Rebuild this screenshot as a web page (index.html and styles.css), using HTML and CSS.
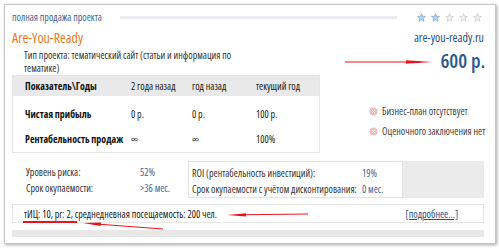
FILE: index.html
```html
<!DOCTYPE html>
<html lang="ru">
<head>
    <meta charset="UTF-8">
    <title>Are-You-Ready</title>
    <link rel="stylesheet" href="styles.css">
</head>
<body>
    <div class="card">
        <div class="topRow">
            <a class="saleType">полная продажа проекта</a>
            <div class="topLine"></div>
            <div class="stars">
                <svg class="star on" viewBox="0 0 10 10"><polygon points="5,0.6 6.2,3.7 9.5,3.8 6.9,5.9 7.8,9.3 5,7.4 2.2,9.3 3.1,5.9 0.5,3.8 3.8,3.7"/></svg>
                <svg class="star on" viewBox="0 0 10 10"><polygon points="5,0.6 6.2,3.7 9.5,3.8 6.9,5.9 7.8,9.3 5,7.4 2.2,9.3 3.1,5.9 0.5,3.8 3.8,3.7"/></svg>
                <svg class="star" viewBox="0 0 10 10"><polygon points="5,0.6 6.2,3.7 9.5,3.8 6.9,5.9 7.8,9.3 5,7.4 2.2,9.3 3.1,5.9 0.5,3.8 3.8,3.7"/></svg>
                <svg class="star" viewBox="0 0 10 10"><polygon points="5,0.6 6.2,3.7 9.5,3.8 6.9,5.9 7.8,9.3 5,7.4 2.2,9.3 3.1,5.9 0.5,3.8 3.8,3.7"/></svg>
                <svg class="star" viewBox="0 0 10 10"><polygon points="5,0.6 6.2,3.7 9.5,3.8 6.9,5.9 7.8,9.3 5,7.4 2.2,9.3 3.1,5.9 0.5,3.8 3.8,3.7"/></svg>
            </div>
        </div>

        <div class="titleRow">
            <div class="projectName">Are-You-Ready</div>
            <a class="domain">are-you-ready.ru</a>
        </div>

        <div class="mainRow">
            <div class="leftCol">
                <p class="projectType">Тип проекта: тематический сайт (статьи и информация по тематике)</p>
                <table class="finance">
                    <tr class="head">
                        <th>Показатель\Годы</th>
                        <td>2 года назад</td>
                        <td>год назад</td>
                        <td>текущий год</td>
                    </tr>
                    <tr class="first">
                        <th>Чистая прибыль</th>
                        <td>0 р.</td>
                        <td>0 р.</td>
                        <td>100 р.</td>
                    </tr>
                    <tr class="last">
                        <th>Рентабельность продаж</th>
                        <td>∞</td>
                        <td>∞</td>
                        <td>100%</td>
                    </tr>
                </table>
            </div>
            <div class="rightCol">
                <div class="price">600 р.</div>
                <ul class="docs">
                    <li><svg class="noIcon" viewBox="0 0 10 10"><circle cx="5" cy="5" r="4.5"/><path d="M3.3 3.3 L6.7 6.7 M6.7 3.3 L3.3 6.7"/></svg>Бизнес-план отсутствует</li>
                    <li><svg class="noIcon" viewBox="0 0 10 10"><circle cx="5" cy="5" r="4.5"/><path d="M3.3 3.3 L6.7 6.7 M6.7 3.3 L3.3 6.7"/></svg>Оценочного заключения нет</li>
                </ul>
            </div>
        </div>

        <div class="stats">
            <div class="statCell riskCell">
                <span>Уровень риска:</span><span class="val">52%</span>
                <span>Срок окупаемости:</span><span class="val">&gt;36 мес.</span>
            </div>
            <div class="statCell roiCell">
                <span>ROI (рентабельность инвестиций):</span><span class="val">19%</span>
                <span>Срок окупаемости с учётом дисконтирования:</span><span class="val">0 мес.</span>
            </div>
            <div class="statFill"></div>
        </div>

        <div class="seoRow">
            <span>тИЦ: 10, pr: 2, среднедневная посещаемость: 200 чел.</span>
            <a class="more" href="#">[подробнее...]</a>
        </div>
        <div class="bottomBar"></div>
    </div>

    <svg class="marks" width="499" height="249" viewBox="0 0 499 249">
        <line x1="345" y1="62" x2="420" y2="62"/>
        <polygon points="406,60.3 432,62 406,63.7"/>
        <rect x="23" y="221" width="54" height="2"/>
        <line x1="163" y1="229" x2="92" y2="223.7"/>
        <polygon points="83,223 101,222.6 100.6,226"/>
        <line x1="308" y1="214" x2="238" y2="214.8"/>
        <polygon points="227,215 246,213.3 246,216.5"/>
    </svg>
</body>
</html>
```
FILE: styles.css
```css
body {
    margin: 0;
    padding: 4px;
    font-family: "Open Sans", sans-serif;
    font-stretch: condensed;
    font-size: 10px;
    color: #333;
    background: #fff;
}

a {
    text-decoration: none;
}

.card {
    box-sizing: border-box;
    width: 492px;
    height: 240px;
    border: 1px solid #c9c9c9;
    box-shadow: 1px 1px 3px rgba(0, 0, 0, 0.35);
    padding: 5px 11px 0 7px;
    background: #fff;
}

.topRow {
    display: flex;
    align-items: center;
    height: 14px;
}

.saleType {
    width: 108px;
    color: #3b679a;
    font-size: 10px;
}

.topLine {
    flex: 1;
    height: 3px;
    background: #eeebf1;
    margin-right: 20px;
}

.stars {
    display: flex;
    gap: 5px;
    margin-right: 2px;
}

.star {
    width: 9px;
    height: 9px;
}

.star polygon {
    fill: #f3f3f3;
    stroke: #c9c9c9;
    stroke-width: 0.8;
}

.star.on polygon {
    fill: #b5d5ee;
    stroke: #7eaad4;
}

.titleRow {
    display: flex;
    justify-content: space-between;
    align-items: center;
    height: 18px;
    margin-top: 4px;
}

.projectName {
    color: #f07a1c;
    font-size: 14px;
}

.domain {
    color: #27508a;
    font-size: 12px;
}

.mainRow {
    display: flex;
}

.leftCol {
    width: 308px;
}

.projectType {
    width: 212px;
    margin: 3px 0 1px;
    padding-left: 12px;
    line-height: 12.5px;
    color: #333;
}

.finance {
    width: 308px;
    border-collapse: collapse;
    border: 1px solid #e6e6e6;
    table-layout: fixed;
}

.finance th,
.finance td {
    padding: 0;
    text-align: left;
    white-space: nowrap;
    overflow: hidden;
    color: #222;
}

.finance th {
    width: 106px;
    padding-left: 12px;
    font-weight: 700;
    color: #111;
}

.finance td:nth-child(2) {
    width: 61px;
}

.finance td:nth-child(3) {
    width: 64px;
}

.finance .head {
    height: 20px;
    background: #e9e9e9;
}

.finance .first {
    height: 31px;
    vertical-align: bottom;
}

.finance .first th,
.finance .first td {
    padding-bottom: 6px;
}

.finance .last {
    height: 26px;
    vertical-align: top;
}

.finance .last th,
.finance .last td {
    padding-top: 5px;
}

.rightCol {
    flex: 1;
    display: flex;
    flex-direction: column;
}

.price {
    margin-top: 4px;
    text-align: right;
    font-size: 20px;
    line-height: 22px;
    font-weight: 600;
    color: #2a5a8d;
}

.docs {
    list-style: none;
    margin: 32px 0 0;
    padding: 0 0 0 49px;
    display: flex;
    flex-direction: column;
    gap: 6px;
}

.docs li {
    display: flex;
    align-items: center;
    line-height: 14px;
    white-space: nowrap;
    color: #444;
}

.noIcon {
    width: 9px;
    height: 9px;
    margin-right: 4px;
}

.noIcon circle {
    fill: #f5b9c2;
}

.noIcon path {
    stroke: #fff;
    stroke-width: 1.1;
}

.stats {
    display: flex;
    height: 37px;
    margin-top: 8px;
}

.statCell {
    display: grid;
    align-content: start;
    line-height: 16px;
    padding-top: 3px;
    box-sizing: border-box;
}

.riskCell {
    width: 176px;
    padding-left: 14px;
    grid-template-columns: 114px auto;
}

.roiCell {
    width: 215px;
    padding-left: 3px;
    border: 1px solid #e3e3e3;
    grid-template-columns: 170px auto;
}

.val {
    color: #3b679a;
}

.statFill {
    flex: 1;
    background: #ebebeb;
}

.seoRow {
    display: flex;
    justify-content: space-between;
    align-items: center;
    height: 19px;
    margin-top: 6px;
    box-sizing: border-box;
    border: 1px solid #e6e6e6;
    padding: 0 25px 0 11px;
    font-size: 10px;
    color: #222;
}

.more {
    color: #27508a;
    text-decoration: underline;
    font-size: 10px;
}

.bottomBar {
    height: 7px;
    margin-top: 7px;
    background: #e8e8e8;
}

.marks {
    position: absolute;
    left: 0;
    top: 0;
    pointer-events: none;
}

.marks line {
    stroke: #e8141c;
    stroke-width: 1;
}

.marks polygon,
.marks rect {
    fill: #e8141c;
}
```
